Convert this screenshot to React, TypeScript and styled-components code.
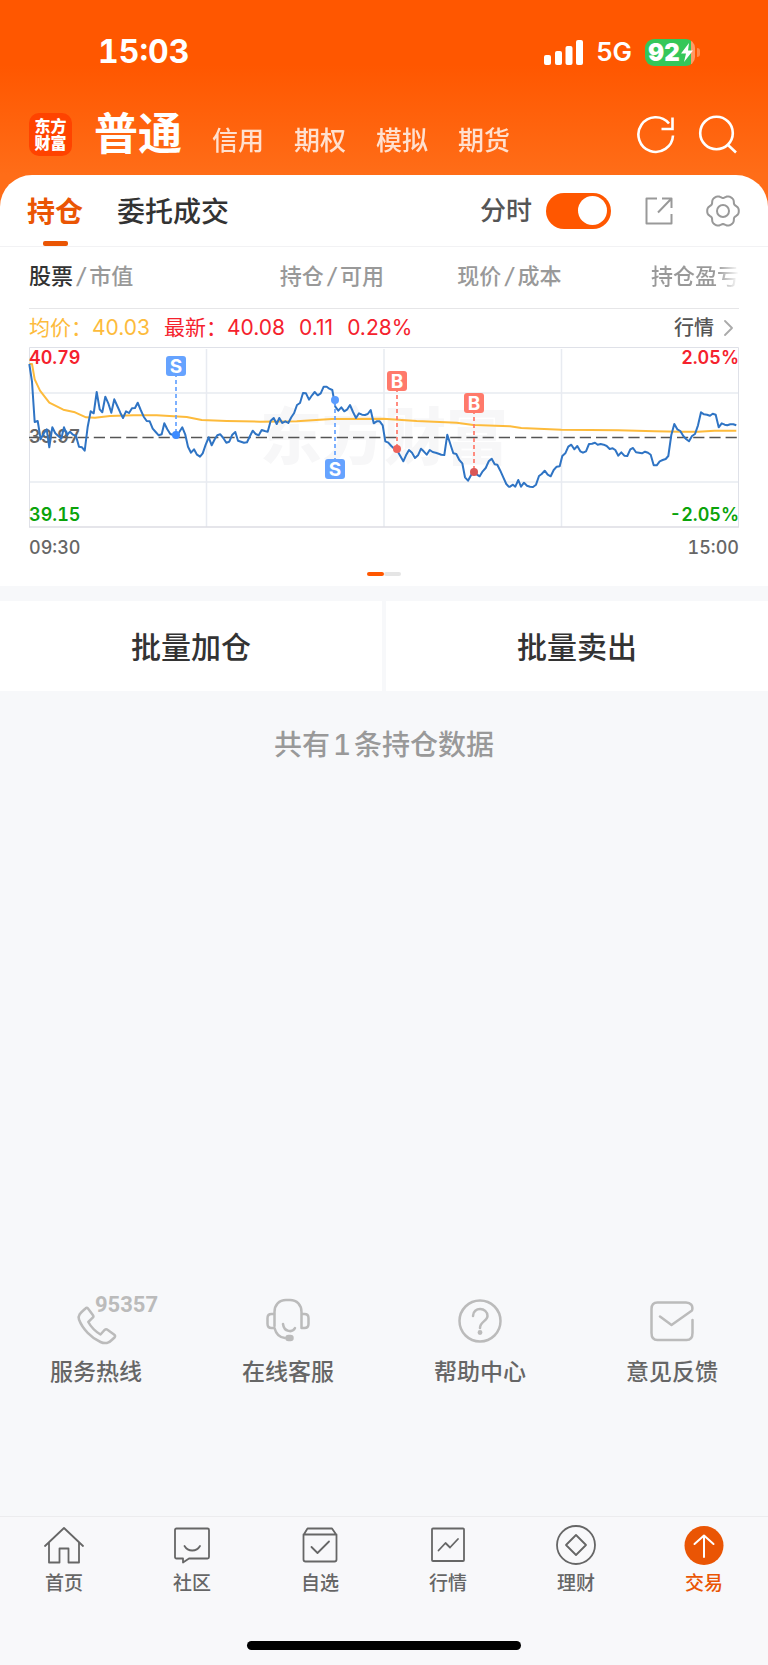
import React from "react";
import styled, { createGlobalStyle, css } from "styled-components";

const GlobalStyle = createGlobalStyle`
  *, *::before, *::after { box-sizing: border-box; }
  body {
    margin: 0;
    background: #f7f8fa;
    color: #333;
    font-family: Inter, "Noto Sans CJK SC", sans-serif;
  }
  button { margin: 0; padding: 0; border: 0; background: none; font: inherit; color: inherit; cursor: pointer; }
  a { color: inherit; text-decoration: none; }
  svg { display: block; flex: none; }
`;

/* ---------- layout ---------- */

const Page = styled.div`
  display: flex;
  flex-direction: column;
  min-height: 100vh;
`;

const Top = styled.div`
  background: linear-gradient(#ff5700 65px, #ff6d18 175px);
`;

const StatusBar = styled.div`
  display: flex;
  align-items: center;
  justify-content: space-between;
  height: 94px;
  padding: 10px 73px 0 98px;
  color: #fff;
`;

const Clock = styled.span`
  font-size: 32px;
  font-weight: 700;
  font-variant-numeric: tabular-nums;
  line-height: 40px;
`;

const StatusIcons = styled.div`
  display: flex;
  align-items: center;
  gap: 13px;
`;

const Network = styled.span`
  font-size: 26px;
  font-weight: 600;
  line-height: 32px;
`;

const Battery = styled.span`
  position: relative;
  display: flex;
  align-items: center;
  width: 50px;
  height: 27px;
  padding-left: 3px;
  border-radius: 9px;
  background: linear-gradient(90deg, #34c759 92%, #ff9a66 92%);
  font-size: 24px;
  font-weight: 900;
  line-height: 27px;

  &::after {
    content: "";
    position: absolute;
    left: 52px;
    top: 9px;
    width: 3px;
    height: 9px;
    border-radius: 0 4px 4px 0;
    background: #ff8a4d;
  }
`;

const TitleBar = styled.header`
  display: flex;
  align-items: center;
  height: 81px;
  padding: 0 30px 0 29px;
  color: #fff;
`;

const Logo = styled.a`
  display: flex;
  align-items: center;
  justify-content: center;
  width: 43px;
  height: 43px;
  margin-right: 22px;
  border-radius: 10px;
  background: #ff4300;
  font-size: 16px;
  font-weight: 900;
  line-height: 17px;
  text-align: center;
`;

const AccountNav = styled.nav`
  display: flex;
  align-items: baseline;
  flex: 1;
  gap: 30px;
  padding-top: 6px;
`;

const AccountLink = styled.a<{ $active?: boolean }>`
  font-size: ${(p) => (p.$active ? 44 : 26)}px;
  font-weight: ${(p) => (p.$active ? 700 : 500)};
  line-height: 60px;
  opacity: ${(p) => (p.$active ? 1 : 0.8)};
`;

const HeaderActions = styled.div`
  display: flex;
  gap: 22px;
`;

const Card = styled.section`
  border-radius: 32px 32px 0 0;
  background: #fff;
`;

const TabRow = styled.div`
  display: flex;
  align-items: center;
  height: 72px;
  padding: 0 28px 0 27px;
  border-bottom: 1px solid #f2f2f4;
`;

const Tab = styled.button<{ $active?: boolean }>`
  position: relative;
  height: 71px;
  margin-right: 34px;
  padding-top: 2px;
  font-size: 28px;
  font-weight: 500;
  line-height: 36px;
  ${(p) =>
    p.$active &&
    css`
      color: #ea5504;
      font-weight: 700;
      &::after {
        content: "";
        position: absolute;
        left: 50%;
        bottom: 0;
        width: 25px;
        height: 5px;
        margin-left: -12px;
        border-radius: 2px;
        background: #ea5504;
      }
    `}
`;

const ToggleLabel = styled.label`
  display: flex;
  align-items: center;
  gap: 14px;
  margin-left: auto;
  color: #555;
  font-size: 26px;
  font-weight: 500;
  line-height: 36px;
`;

const Toggle = styled.input`
  appearance: none;
  display: flex;
  align-items: center;
  justify-content: flex-start;
  width: 65px;
  height: 36px;
  margin: 0;
  padding: 0 4px;
  border-radius: 18px;
  background: #d5d5d8;

  &::before {
    content: "";
    width: 29px;
    height: 29px;
    border-radius: 50%;
    background: #fff;
  }
  &:checked { justify-content: flex-end; background: #ff5700; }
`;

const IconButton = styled.button<{ $gap?: number }>`
  display: flex;
  margin-left: ${(p) => p.$gap || 0}px;
`;

const Holdings = styled.div`
  padding: 0 29px 5px;
`;

const HoldingsTable = styled.table`
  width: 100%;
  border-collapse: collapse;
  table-layout: fixed;
`;

const ColumnHead = styled.th<{ $first?: boolean; $fade?: boolean }>`
  height: 61px;
  padding: 0 0 3px;
  border-bottom: 1px solid #e6e6e8;
  color: #999;
  font-size: 22px;
  font-weight: 500;
  line-height: 30px;
  text-align: ${(p) => (p.$first ? "left" : "right")};
  white-space: nowrap;

  strong { color: #333; font-weight: 500; }
  i { padding: 0 4px; }
  ${(p) =>
    p.$fade &&
    css`
      span {
        background: linear-gradient(90deg, #999 75%, #fff 100%);
        background-clip: text;
        color: transparent;
      }
    `}
`;

const QuoteRow = styled.div`
  display: flex;
  align-items: center;
  height: 38px;
  font-size: 21px;
  line-height: 28px;
`;

const Quote = styled.span<{ $color: string }>`
  margin-right: 14px;
  color: ${(p) => p.$color};
`;

const QuoteLink = styled.a`
  display: flex;
  align-items: center;
  gap: 10px;
  margin-left: auto;
  padding-right: 6px;
  color: #555;
  font-size: 20px;
  font-weight: 500;
`;

const Chart = styled.svg`
  width: 100%;
  height: auto;
  overflow: visible;
`;

const TimeAxis = styled.div`
  display: flex;
  align-items: center;
  justify-content: space-between;
  height: 38px;
  color: #666;
  font-size: 18px;
  font-weight: 500;
  font-variant-numeric: tabular-nums;
`;

const Pager = styled.div`
  display: flex;
  align-items: center;
  justify-content: center;
  height: 14px;
`;

const PagerMark = styled.span<{ $active?: boolean }>`
  width: 17px;
  height: 4px;
  border-radius: 2px;
  background: ${(p) => (p.$active ? "#ff5700" : "#e5e5e5")};
`;

const BatchRow = styled.div`
  display: flex;
  gap: 4px;
  margin-top: 15px;
`;

const BatchButton = styled.button`
  flex: 1;
  height: 90px;
  padding-bottom: 2px;
  background: #fff;
  font-size: 30px;
  font-weight: 500;
`;

const Summary = styled.p`
  flex: 1;
  margin: 0;
  padding-top: 34px;
  color: #999;
  font-size: 28px;
  font-weight: 500;
  font-variant-numeric: tabular-nums;
  line-height: 40px;
  text-align: center;

  span { padding: 0 3px; }
`;

const Services = styled.nav`
  display: flex;
  padding-bottom: 129px;
`;

const ServiceLink = styled.a`
  display: flex;
  flex: 1;
  flex-direction: column;
  align-items: center;
  gap: 11px;
  color: #666;
  font-size: 23px;
  font-weight: 500;
  line-height: 30px;
`;

const ServiceIcon = styled.span`
  position: relative;
  display: flex;
  align-items: flex-end;
  height: 52px;
`;

const Hotline = styled.span`
  position: absolute;
  left: 21px;
  top: 0;
  color: #bbb;
  font-family: Roboto, sans-serif;
  font-size: 22px;
  font-weight: 700;
  line-height: 22px;
`;

const BottomBar = styled.footer`
  display: flex;
  flex-direction: column;
  align-items: center;
  justify-content: space-between;
  height: 149px;
  padding: 8px 0 15px;
  border-top: 1px solid #ececee;
  background: #f8f8fa;
`;

const BottomNav = styled.nav`
  display: flex;
  width: 100%;
`;

const BottomLink = styled.a<{ $active?: boolean }>`
  display: flex;
  flex: 1;
  flex-direction: column;
  align-items: center;
  gap: 7px;
  color: ${(p) => (p.$active ? "#ea5504" : "#666")};
  font-size: 19px;
  font-weight: 500;
  line-height: 24px;
`;

const HomeIndicator = styled.div`
  width: 274px;
  height: 9px;
  border-radius: 5px;
  background: #000;
`;

/* ---------- intraday chart ---------- */

type Point = [number, number];

// Plot samples, three units per pixel, measured from the plot's padded origin.
const ORIGIN: Point = [87, 21];

const priceOpen: Point[] = [
  [88,72],[96,125],[104,246],[113,243],[122,298],[131,280],[140,268],[148,322],[157,262],[166,280],[175,288],[184,296],
  [192,262],[201,285],[210,275],[219,284],[228,288],[237,320],[246,322],[254,332],[263,260],[272,214],[281,220],[290,156],
  [299,208],[307,217],[316,170],[325,190],[334,218],[343,178],[352,198],[361,218],[369,234],[378,214],[387,219],[396,205],
  [405,204],[413,188],[422,210],[431,230],[440,243],[449,244],[458,266],[467,276],[476,286],[485,283],[493,250],[502,268],
  [511,282],[520,285],[529,288],[538,276],[547,262],[556,284],[564,320],[573,338],[582,328],[591,344],[600,350],[608,340],
  [617,314],[626,292],[635,316],[644,298],[652,286],[661,283],[670,294],[679,308],[688,305],[697,284],[706,276],[714,302],
  [723,305],[732,308],[741,307],[750,288],[758,272],[767,282],[776,286],
];

const priceMid: Point[] = [
  [35,270],[44,273],[53,275],[62,242],[71,234],[80,252],[88,234],[97,249],[106,244],[115,249],[124,232],[132,220],
  [141,195],[150,189],[159,159],[168,160],[177,179],[186,166],[194,156],[203,166],[212,160],[221,140],[230,140],[238,146],
  [247,150],[256,200],[265,212],[274,202],[283,214],[292,208],[300,195],[309,216],[318,234],[327,220],[336,224],[345,225],
  [353,222],[362,210],[371,250],[380,244],[389,244],[398,256],[406,304],[415,308],[424,318],[433,326],[442,332],[451,348],
  [460,364],[468,346],[477,330],[486,338],[495,354],[504,346],[513,326],[521,334],[530,344],[539,330],[548,336],[557,338],
  [566,341],[574,344],[583,345],[592,284],[601,312],[610,340],[619,342],[628,360],[637,370],[645,412],[654,422],[663,406],
  [672,390],[681,404],[689,409],[698,394],[707,384],[716,364],[725,356],[734,373],[742,374],[751,392],[760,412],[769,432],
  [776,440],
];

const priceClose: Point[] = [
  [6,440],[15,434],[22,440],[31,420],[39,440],[48,428],[57,437],[66,440],[75,441],[84,434],[93,408],[101,402],
  [110,392],[119,404],[128,409],[137,390],[146,380],[155,379],[163,348],[172,340],[181,320],[190,314],[199,328],[208,318],
  [217,334],[225,338],[234,334],[243,312],[252,311],[261,308],[269,314],[278,312],[287,314],[296,318],[305,327],[314,325],
  [322,330],[331,347],[340,337],[349,347],[358,348],[367,328],[375,324],[384,337],[393,338],[402,340],[411,335],[420,338],
  [428,344],[437,376],[446,376],[455,364],[464,360],[473,357],[481,348],[490,285],[499,252],[508,268],[517,273],[526,288],
  [535,298],[543,304],[552,288],[561,282],[570,256],[579,217],[588,223],[597,224],[606,227],[614,221],[623,224],[632,262],
  [641,250],[650,254],[658,256],[667,253],[676,253],[685,256],
];

const average: Point[] = [
  [88,72],[96,72],[104,118],[120,152],[148,188],[190,209],[225,217],[258,232],[285,233],[330,228],[400,226],[470,226],
  [560,231],[605,240],[680,243],[780,245],[890,244],[995,237],[1150,236],[1250,243],[1370,248],[1420,255],[1530,259],
  [1564,264],[1684,269],[1854,271],[1964,274],[2044,275],[2094,275],[2144,272],[2209,272],
];

const shift = (points: Point[], dx: number): Point[] => points.map(([x, y]) => [x + dx, y]);

const price: Point[] = [...priceOpen, ...shift(priceMid, 750), ...shift(priceClose, 1524)];

const toPoints = (points: Point[]) =>
  points.map(([x, y]) => `${((x - ORIGIN[0]) / 3).toFixed(1)},${((y - ORIGIN[1]) / 3).toFixed(1)}`).join(" ");

const trades = [
  { side: "S", x: 147, box: 19, dot: 88, fill: "#66a3ff", point: "#3d8bff" },
  { side: "S", x: 306, box: 122, dot: 53, fill: "#66a3ff", point: "#5a9cff" },
  { side: "B", x: 368, box: 34, dot: 102, fill: "#ff7a6b", point: "#f0645c" },
  { side: "B", x: 445, box: 56, dot: 125, fill: "#ff7a6b", point: "#d95757" },
];

const ChartLabel = styled.text<{ $color: string }>`
  fill: ${(p) => p.$color};
  font-size: 18px;
  font-weight: 600;
  font-variant-numeric: tabular-nums;
`;

const Watermark = styled.text`
  fill: #f7f7f8;
  font-size: 62px;
  font-weight: 900;
`;

const TradeLetter = styled.text`
  fill: #fff;
  font-size: 19px;
  font-weight: 700;
`;

function IntradayChart() {
  return (
    <Chart viewBox="0 0 710 182" role="img" aria-label="分时走势">
      <Watermark x="355" y="113" textAnchor="middle">东方财富</Watermark>
      <g fill="none" stroke="#e8ebf1" strokeWidth="1.5">
        <path d="M0 46H710M0 135H710M177.500 2V180M355 2V180M532.500 2V180" />
        <path d="M0.500 180V0.500H709.500V180" stroke="#dfe1e8" strokeWidth="1" />
        <path d="M0 180H710" stroke="#dddde3" />
      </g>
      <path d="M0 90.500H710" stroke="#555" strokeWidth="1.500" strokeDasharray="11.200 5" />
      <ChartLabel x="0" y="96" $color="#666">39.97</ChartLabel>
      <polyline points={toPoints(average)} fill="none" stroke="#fdbb3c" strokeWidth="2" strokeLinejoin="round" />
      <polyline points={toPoints(price)} fill="none" stroke="#2f74c4" strokeWidth="2" strokeLinejoin="round" />
      {trades.map((t) => (
        <g key={t.x}>
          <line x1={t.x} x2={t.x} y1={t.box} y2={t.dot} stroke={t.fill} strokeWidth="1.700" strokeDasharray="4 3" />
          <circle cx={t.x} cy={t.dot} r="4" fill={t.point} />
          <rect x={t.x - 10} y={t.box - 10} width="20" height="20" rx="3" fill={t.fill} />
          <TradeLetter x={t.x} y={t.box + 7} textAnchor="middle">{t.side}</TradeLetter>
        </g>
      ))}
      <ChartLabel x="0" y="17" $color="#f5222d">40.79</ChartLabel>
      <ChartLabel x="0" y="174" $color="#0aa30a">39.15</ChartLabel>
      <ChartLabel x="710" y="17" textAnchor="end" $color="#f5222d">2.05%</ChartLabel>
      <ChartLabel x="710" y="174" textAnchor="end" $color="#0aa30a">-2.05%</ChartLabel>
    </Chart>
  );
}

/* ---------- icons ---------- */

const gearOutline =
  Array.from({ length: 72 }, (_, i) => {
    const a = (i * Math.PI) / 36;
    const r = 14.7 + 1.4 * Math.cos(6 * a) - 0.3 * Math.cos(12 * a);
    return `${i ? "L" : "M"}${(17 + r * Math.cos(a)).toFixed(2)} ${(17 + r * Math.sin(a)).toFixed(2)}`;
  }).join("") + "Z";

const line = { fill: "none", stroke: "currentColor", strokeLinecap: "round", strokeLinejoin: "round" } as const;

const SignalIcon = () => (
  <svg width="39" height="25" viewBox="0 0 39 25" fill="#fff">
    <rect x="0" y="15" width="7" height="10" rx="2" />
    <rect x="11" y="11" width="7" height="14" rx="2" />
    <rect x="21.500" y="6" width="7" height="19" rx="2" />
    <rect x="32" y="0" width="7" height="25" rx="2" />
  </svg>
);

const BoltIcon = () => (
  <svg width="14" height="19" viewBox="0 0 14 19" fill="#fff">
    <path d="M9 0L1 10.500H6L4 19L13 7.500H8Z" />
  </svg>
);

const RefreshIcon = () => (
  <svg width="40" height="40" viewBox="0 0 40 40" fill="none" stroke="#fff" strokeWidth="2.600">
    <path d="M37 20.500A17.300 17.300 0 1 1 33 8.500" />
    <path d="M36.500 2.500V14H25.500" />
  </svg>
);

const SearchIcon = () => (
  <svg width="40" height="40" viewBox="0 0 40 40" fill="none" stroke="#fff" strokeWidth="2.600">
    <circle cx="18.500" cy="18" r="16.300" />
    <path d="M29.500 29.500L38 37.500" />
  </svg>
);

const ShareIcon = () => (
  <svg width="28" height="28" viewBox="0 0 28 28" {...line} stroke="#999" strokeWidth="2" strokeLinecap="butt">
    <path d="M12 1.500H1.500V26.500H26.500V17" />
    <path d="M17 1.500H26.500V11M26 2L13 15.500" />
  </svg>
);

const GearIcon = () => (
  <svg width="34" height="34" viewBox="0 0 34 34" {...line} stroke="#999" strokeWidth="2">
    <path d={gearOutline} />
    <circle cx="17" cy="17" r="6" />
  </svg>
);

const ChevronIcon = () => (
  <svg width="9" height="16" viewBox="0 0 9 16" {...line} stroke="#aaa" strokeWidth="1.800">
    <path d="M1 1L8 8L1 15" />
  </svg>
);

const serviceLine = { ...line, stroke: "#bbb", strokeWidth: 2.5 };

const PhoneIcon = () => (
  <svg width="44" height="44" viewBox="0 0 44 44" {...serviceLine}>
    <path d="M11.500 6.500C12.500 5.500 13.500 5.700 14.200 6.700L19 13.200C19.700 14.200 19.500 15 18.700 15.700L14.300 20C17 25 21.500 29.500 26.500 32.500L30.500 28C31.500 27.200 32.500 27 33.500 27.800L40 32.500C41.300 33.500 41.500 34.500 40.500 35.500C36.500 39.500 33 43 26.500 40C17.500 36 8.500 27 5 17.500C3.500 13 7 10.500 11.500 6.500Z" />
  </svg>
);

const HeadsetIcon = () => (
  <svg width="44" height="50" viewBox="0 0 44 50" {...serviceLine}>
    <path d="M8.500 30V16C8.500 9 13 4 20 4H24C31 4 35.500 9 35.500 16V32H38.500C41 32 42.500 30.500 42.500 28V22C42.500 19.500 41 18 38.500 18H36" />
    <path d="M8 18H5.500C3 18 1.500 19.500 1.500 22V28C1.500 30.500 3 32 5.500 32H8.500C10 38 13 41.500 19 42" />
    <path d="M17 28C18 36 26.500 37 29 32" />
    <rect x="20.500" y="40" width="6" height="4" rx="2" fill="#bbb" />
  </svg>
);

const HelpIcon = () => (
  <svg width="44" height="50" viewBox="0 0 44 50" {...serviceLine}>
    <circle cx="22" cy="25" r="20.500" />
    <path d="M15 20C15 10.500 29.500 11 29.500 20C29.500 25 22 25.500 22 32" />
    <circle cx="22" cy="36.500" r="1.200" fill="#bbb" />
  </svg>
);

const FeedbackIcon = () => (
  <svg width="44" height="50" viewBox="0 0 44 50" {...serviceLine}>
    <path d="M42.500 24V37C42.500 41 40.500 44 36.500 44H7.500C3.500 44 1.500 41 1.500 37V13C1.500 9 3.500 6.500 7.500 6.500H36C40.500 6.500 43.500 9.500 42 14.500L21.500 29L10 20.500" />
  </svg>
);

const tabLine = { width: 40, height: 40, viewBox: "0 0 40 40", ...line, strokeWidth: 1.8 };

const HomeIcon = () => (
  <svg {...tabLine}>
    <path d="M1 21L20 3L39 21M5 17.500V37.500H15.500V23.500H24.500V37.500H35V17.500" />
  </svg>
);

const CommunityIcon = () => (
  <svg {...tabLine}>
    <path d="M4.500 3.500H35.500Q37 3.500 37 5V32Q37 33.500 35.500 33.500H17L11 37.500V33.500H4.500Q3 33.500 3 32V5Q3 3.500 4.500 3.500Z" />
    <path d="M12.500 21C16 27 24.500 27 28 21" />
  </svg>
);

const WatchlistIcon = () => (
  <svg {...tabLine}>
    <path d="M3.500 10L7.500 3.500H32L36.500 10V34.500Q36.500 36.500 34.500 36.500H5.500Q3.500 36.500 3.500 34.500ZM3.500 9.500H36.500" />
    <path d="M11.500 22L17.500 28L29 16.500" />
  </svg>
);

const MarketIcon = () => (
  <svg {...tabLine}>
    <rect x="4" y="3.500" width="32" height="32.500" rx="1" />
    <path d="M10.500 25.500L17.500 18L22 22.500L30 14" />
  </svg>
);

const WealthIcon = () => (
  <svg {...tabLine}>
    <circle cx="20" cy="20" r="19" />
    <path d="M20 10L30 20L20 30L10 20Z" />
  </svg>
);

const TradeIcon = () => (
  <svg {...tabLine}>
    <circle cx="20" cy="20.500" r="19.500" fill="currentColor" stroke="none" />
    <path d="M20 32V11M10.500 19L20 10.500L29.500 19" stroke="#fff" strokeWidth="2" />
  </svg>
);

/* ---------- page ---------- */

const accounts = ["普通", "信用", "期权", "模拟", "期货"];

const services = [
  { label: "服务热线", icon: <><PhoneIcon /><Hotline>95357</Hotline></> },
  { label: "在线客服", icon: <HeadsetIcon /> },
  { label: "帮助中心", icon: <HelpIcon /> },
  { label: "意见反馈", icon: <FeedbackIcon /> },
];

const tabs = [
  { label: "首页", icon: <HomeIcon /> },
  { label: "社区", icon: <CommunityIcon /> },
  { label: "自选", icon: <WatchlistIcon /> },
  { label: "行情", icon: <MarketIcon /> },
  { label: "理财", icon: <WealthIcon /> },
  { label: "交易", icon: <TradeIcon />, active: true },
];

export default function App() {
  return (
    <Page>
      <GlobalStyle />
      <Top>
        <StatusBar>
          <Clock>15:03</Clock>
          <StatusIcons>
            <SignalIcon />
            <Network>5G</Network>
            <Battery>92<BoltIcon /></Battery>
          </StatusIcons>
        </StatusBar>
        <TitleBar>
          <Logo href="#home">东方<br />财富</Logo>
          <AccountNav>
            {accounts.map((name, i) => (
              <AccountLink key={name} href="#account" $active={i === 0}>{name}</AccountLink>
            ))}
          </AccountNav>
          <HeaderActions>
            <IconButton aria-label="刷新"><RefreshIcon /></IconButton>
            <IconButton aria-label="搜索"><SearchIcon /></IconButton>
          </HeaderActions>
        </TitleBar>
        <Card>
          <TabRow>
            <Tab $active>持仓</Tab>
            <Tab>委托成交</Tab>
            <ToggleLabel>
              分时
              <Toggle type="checkbox" defaultChecked />
            </ToggleLabel>
            <IconButton $gap={34} aria-label="分享"><ShareIcon /></IconButton>
            <IconButton $gap={33} aria-label="设置"><GearIcon /></IconButton>
          </TabRow>
          <Holdings>
            <HoldingsTable>
              <thead>
                <tr>
                  <ColumnHead $first><strong>股票</strong><i>/</i>市值</ColumnHead>
                  <ColumnHead>持仓<i>/</i>可用</ColumnHead>
                  <ColumnHead>现价<i>/</i>成本</ColumnHead>
                  <ColumnHead $fade><span>持仓盈亏</span></ColumnHead>
                </tr>
              </thead>
            </HoldingsTable>
            <QuoteRow>
              <Quote $color="#fdbb3c">均价：40.03</Quote>
              <Quote $color="#f5222d">最新：40.08</Quote>
              <Quote $color="#f5222d">0.11</Quote>
              <Quote $color="#f5222d">0.28%</Quote>
              <QuoteLink href="#quote">行情<ChevronIcon /></QuoteLink>
            </QuoteRow>
            <IntradayChart />
            <TimeAxis>
              <span>09:30</span>
              <span>15:00</span>
            </TimeAxis>
            <Pager>
              <PagerMark $active />
              <PagerMark />
            </Pager>
          </Holdings>
        </Card>
      </Top>
      <BatchRow>
        <BatchButton>批量加仓</BatchButton>
        <BatchButton>批量卖出</BatchButton>
      </BatchRow>
      <Summary>共有<span>1</span>条持仓数据</Summary>
      <Services>
        {services.map((s) => (
          <ServiceLink key={s.label} href="#service">
            <ServiceIcon>{s.icon}</ServiceIcon>
            {s.label}
          </ServiceLink>
        ))}
      </Services>
      <BottomBar>
        <BottomNav>
          {tabs.map((t) => (
            <BottomLink key={t.label} href="#tab" $active={t.active}>
              {t.icon}
              {t.label}
            </BottomLink>
          ))}
        </BottomNav>
        <HomeIndicator />
      </BottomBar>
    </Page>
  );
}
